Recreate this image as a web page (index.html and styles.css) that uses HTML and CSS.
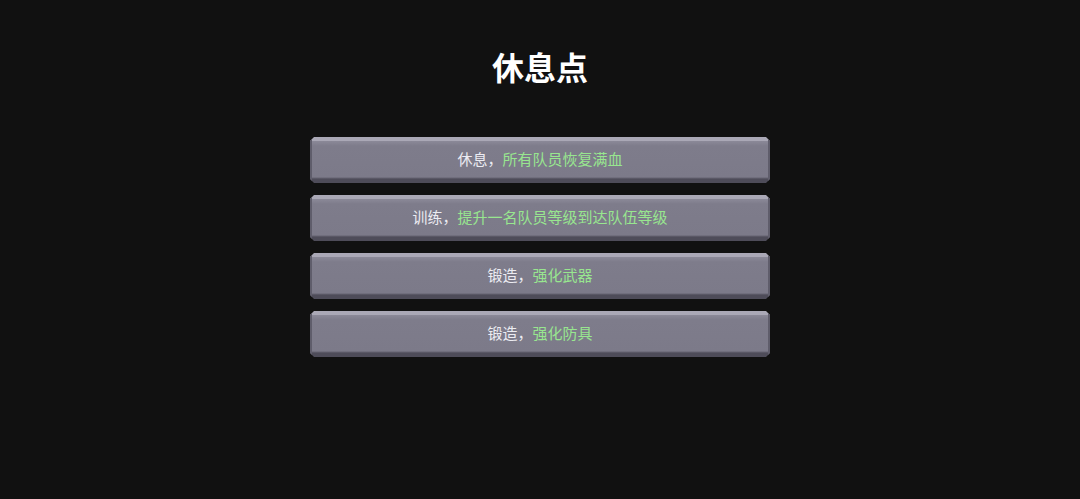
FILE: index.html
```html
<!DOCTYPE html>
<html>
<head>
    <link rel="stylesheet" href="styles.css">
</head>
<body>
<div class="rest">
    <h2 class="rest-title">休息点</h2>
    <div class="options">
        <div class="option">休息，<span class="effect">所有队员恢复满血</span></div>
        <div class="option">训练，<span class="effect">提升一名队员等级到达队伍等级</span></div>
        <div class="option">锻造，<span class="effect">强化武器</span></div>
        <div class="option">锻造，<span class="effect">强化防具</span></div>
    </div>
</div>
</body>
</html>
```

FILE: styles.css
```css
body {
    margin: 0;
    background-color: #111111;
    font-family: "Noto Sans CJK SC", "Noto Sans", sans-serif;
}
.rest {
    display: flex;
    flex-direction: column;
    align-items: center;
    padding-top: 45px;
}
.rest-title {
    margin: 0;
    color: #ffffff;
    font-size: 32px;
    line-height: 42px;
    font-weight: 700;
}
.options {
    display: flex;
    flex-direction: column;
    gap: 12px;
    margin-top: 50px;
}
.option {
    width: 460px;
    height: 46px;
    box-sizing: border-box;
    padding-bottom: 3px;
    display: flex;
    align-items: center;
    justify-content: center;
    color: #ececf2;
    font-size: 15px;
    cursor: pointer;
    background: linear-gradient(#aaa8b6 0, #aaa8b6 4px, #8b8998 4px, #7e7c8b 9px, #7c7a89 40px, #4e4c59 42px, #4e4c59 100%);
    box-shadow: inset 2px 0 0 #5f5d6b, inset -2px 0 0 #5f5d6b;
    clip-path: polygon(4px 0, calc(100% - 4px) 0, 100% 4px, 100% calc(100% - 4px), calc(100% - 4px) 100%, 4px 100%, 0 calc(100% - 4px), 0 4px);
}
.option .effect {
    color: #98e68f;
}
.option:hover {
    filter: brightness(1.1);
}
```
